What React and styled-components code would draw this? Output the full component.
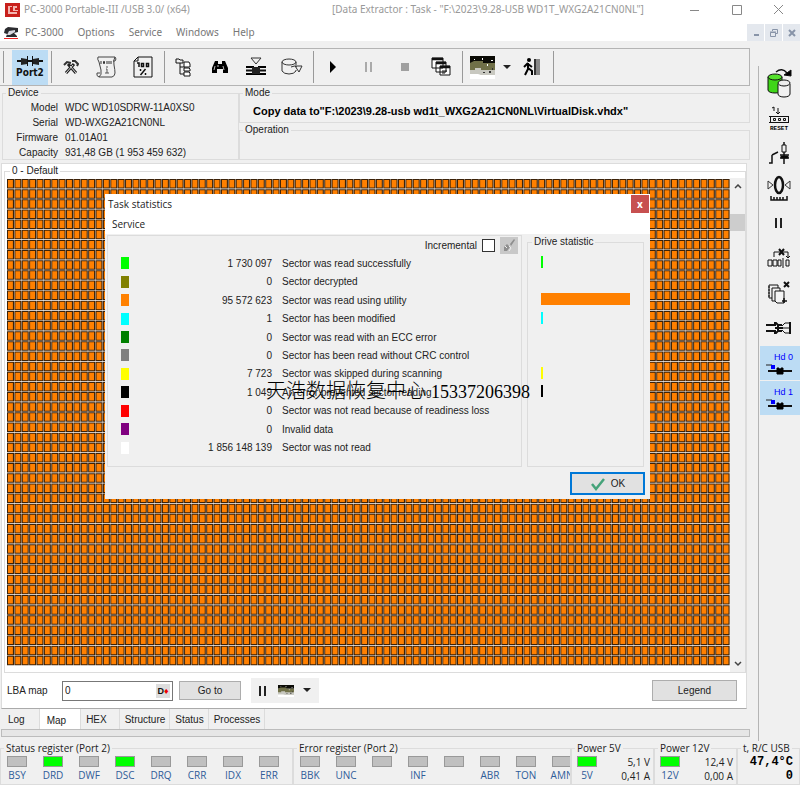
import React from "react";
import styled, { createGlobalStyle, css } from "styled-components";

const stats = [
  { color: "#00ff00", count: "1 730 097", label: "Sector was read successfully", share: 2 },
  { color: "#808000", count: "0", label: "Sector decrypted", share: 0 },
  { color: "#ff8000", count: "95 572 623", label: "Sector was read using utility", share: 100 },
  { color: "#00ffff", count: "1", label: "Sector has been modified", share: 2 },
  { color: "#008000", count: "0", label: "Sector was read with an ECC error", share: 0 },
  { color: "#808080", count: "0", label: "Sector has been read without CRC control", share: 0 },
  { color: "#ffff00", count: "7 723", label: "Sector was skipped during scanning", share: 2 },
  { color: "#000000", count: "1 049", label: "An error prevented sector reading", share: 2 },
  { color: "#ff0000", count: "0", label: "Sector was not read because of readiness loss", share: 0 },
  { color: "#800080", count: "0", label: "Invalid data", share: 0 },
  { color: "#ffffff", count: "1 856 148 139", label: "Sector was not read", share: 0 },
];

const device = [
  ["Model", "WDC WD10SDRW-11A0XS0"],
  ["Serial", "WD-WXG2A21CN0NL"],
  ["Firmware", "01.01A01"],
  ["Capacity", "931,48 GB (1 953 459 632)"],
];

const statusBits = ["BSY", "DRD", "DWF", "DSC", "DRQ", "CRR", "IDX", "ERR"];
const errorBits = ["BBK", "UNC", "", "INF", "", "ABR", "TON", "AMN"];
const tabs = ["Log", "Map", "HEX", "Structure", "Status", "Processes"];

const COLS = 98;
const ROWS = 48;

//#region Icons
const Icon = ({ size = 24, height, children, ...rest }) => (
  <svg
    width={size}
    height={height || size}
    viewBox={`0 0 ${size} ${height || size}`}
    fill="none"
    stroke="#111"
    aria-hidden="true"
    {...rest}
  >
    {children}
  </svg>
);

const AppIcon = () => (
  <Icon size={16} stroke="none">
    <path d="M0 1h15v14H0z" fill="#c8201c" />
    <path d="M3 12V4h4v1H5v5h7v2z" fill="#f3b5b0" />
    <path d="M8 4h4v2h-2v2h3v1H8z" fill="#f3b5b0" />
  </Icon>
);

const DocIcon = () => (
  <Icon size={16} height={14} stroke="none">
    <path d="M1 3l3-2 10 1v4l-4 1 3 3v1H2l1-3-3-1z" fill="#2c2c30" />
    <path d="M5 5l6-1v2l-5 3H3z" fill="#d8d8e0" />
    <path d="M0 12h14v1H0z" fill="#e22" />
  </Icon>
);

const ToolsIcon = () => (
  <Icon size={16}>
    <path d="M3 14l8-9M13 14L5 5" stroke="#222" strokeWidth="3" />
    <path d="M3 14l7-8M13 14L7 7" stroke="#ddd" />
    <path d="M1 6l3-3 4 1M9 2h3l3 3-1 2" stroke="#333" strokeWidth="2" />
  </Icon>
);

const ScrollIcon = () => (
  <Icon size={22}>
    <path d="M2 1h17q-2 3-1 8t1 8q0 3-3 4H3q3-2 2-7L3 6Q1 3 2 1zM3 21q-3-1-2-4h3M17 5h2q2-2 0-4" stroke="#444" />
    <path d="M5 5v3M7.500 5.500h1v2h-1zM11 5v3M13 5v3M15 5v3" stroke="#333" />
    <path d="M10 11h2M10 13h1v4M9 17h4" stroke="#555" />
  </Icon>
);

const ReportIcon = () => (
  <Icon size={20} height={22}>
    <path d="M5 1h14v20H1V5z" />
    <path d="M1 5h4V1" />
    <path d="M4 7h2v4M8.500 7.500h2v3h-2zM13.500 7.500h2v3h-2z" strokeWidth="1.500" />
    <path d="M7.500 13v2M12.500 13l-5 6M12.500 17v2" strokeWidth="1.500" />
  </Icon>
);

const TreeIcon = () => (
  <Icon size={18} height={20}>
    <path d="M1 4V2h3l1 1h3v3H1zM5 6v11h5M5 10h5" />
    <path d="M9 5h5l1 2v3H9zM9 11h5l1 1v2H9zM9 15h5l1 1v3H9z" fill="#fff" />
  </Icon>
);

const FindIcon = () => (
  <Icon size={16}>
    <path d="M3 2h3v3h4V2h3l3 7v5h-5v-4H5v4H0V9z" fill="#000" stroke="none" />
    <path d="M3 7l-1 4M11 7l1 4M6 6v2" stroke="#bbb" />
  </Icon>
);

const SectorIcon = () => (
  <Icon size={22}>
    <path d="M6 2h10l-5 6z" stroke="#333" />
    <path d="M1 10h8v2H1zM13 10h8v2h-8zM1 17h20v2H1z" fill="#000" stroke="none" />
    <path d="M1 14.500h20" strokeWidth="2" />
    <path d="M7 11h8v7H7z" fill="#222" stroke="none" />
  </Icon>
);

const DiskGoIcon = () => (
  <Icon size={22} height={18}>
    <ellipse cx="8" cy="4" rx="7" ry="3" stroke="#333" />
    <path d="M1 4v9q2 3 7 3 5 0 7-3v-1M15 4v3M10 9q4-2 6 0M14 8h7l-3 6z" stroke="#333" fill="none" />
  </Icon>
);

const PlayIcon = () => (
  <Icon size={12}>
    <path d="M3 0l6 6-6 6z" fill="#000" stroke="none" />
  </Icon>
);

const PauseIcon = ({ color = "#222" }) => (
  <Icon size={12}>
    <path d="M3 1v10M8 1v10" stroke={color} strokeWidth="2" />
  </Icon>
);

const StopIcon = () => (
  <Icon size={10}>
    <path d="M1 1h8v8H1z" fill="#a0a0a0" stroke="none" />
  </Icon>
);

const CascadeIcon = () => (
  <Icon size={20} stroke="#111">
    <path d="M1 1h11v10H1zM5 5h10v10H5zM9 9h10v9H9z" fill="#fff" />
    <path d="M1 2h11M5 6h10M9 10h10" strokeWidth="2.500" />
    <path d="M11 14h5M11 16h3" />
  </Icon>
);

const MapImageIcon = ({ size = 25, height = 23 }) => (
  <svg width={size} height={height} viewBox="0 0 25 23" preserveAspectRatio="none" aria-hidden="true">
    <path d="M0 0h25v19H0z" fill="#c8c8c0" />
    <path d="M0 0h25v7H0z" fill="#0a0a05" />
    <path d="M0 7l4-2h9v2h12v7H11v-2H5v2H0z" fill="#707048" />
    <path d="M0 18h8l3 1h14v4H0z" fill="#fff" />
    <path d="M12 2h1v2h-1zM21 4h2v1h-2zM17 8h1v2h-1zM4 3h1v1H4z" fill="#fff" />
    <path d="M13 16h2v1h-2zM19 15h2v2h-2zM22 12h1v2h-1z" fill="#333" />
  </svg>
);

const CaretIcon = () => (
  <Icon size={8} height={5}>
    <path d="M0 0h8L4 4z" fill="#222" stroke="none" />
  </Icon>
);

const ExitIcon = () => (
  <Icon size={20}>
    <path d="M12 2h6v16h-6z" fill="#888" stroke="none" />
    <path d="M12 2h2v16h-2z" fill="#333" stroke="none" />
    <circle cx="7" cy="3" r="2" fill="#000" stroke="none" />
    <path d="M6 6v6l-3 6M6 11l4 3v4M6 6l-4 4M6 7l4 3" strokeWidth="2" stroke="#000" />
  </Icon>
);

const PortIcon = () => (
  <Icon size={26} height={12}>
    <path d="M0 6h26" strokeWidth="2" />
    <path d="M4 3l6 1v5l-6 1zM22 3l-6 1v5l6 1z" fill="#222" stroke="none" />
    <path d="M10.500 1v10M15.500 1v10" />
  </Icon>
);

const CopyDisksIcon = () => (
  <Icon size={26} height={30}>
    <path d="M2 9v13c0 4 14 4 14 0V9" fill="#3fd619" />
    <ellipse cx="9" cy="9" rx="7" ry="3" fill="#55e02c" />
    <path d="M12 16v10c0 4 12 4 12 0V16" fill="#f2f2f2" />
    <ellipse cx="18" cy="15" rx="6" ry="3" fill="#eee" />
    <path d="M10 4q6-5 11 1" strokeWidth="1.5" />
    <path d="M18 7l7 1V2z" fill="#000" />
  </Icon>
);

const ResetIcon = () => (
  <Icon size={22} height={28}>
    <path d="M4 4l2-1v4M10 4v6M8 8l2 2 2-2" />
    <path d="M1 12.500h20M1 18.500h20" />
    <path d="M2.500 13v5M5.500 14.500h2v2h-2zM10.500 14.500h2v2h-2zM15.500 14.500h2v2h-2zM20.500 13v5" />
    <text x="2" y="26" fill="#000" stroke="none" fontSize="6" fontWeight="700" fontFamily="Liberation Mono, monospace">RESET</text>
  </Icon>
);

const SwitchIcon = () => (
  <Icon size={24}>
    <path d="M2 22h3V14M5 14l6-3M13 14h9M17 1v22M13 17h9" strokeWidth="1.500" />
    <path d="M15 4h4v7h-4z" fill="#f0f0f0" />
    <path d="M14 15h7v2h-7z" fill="#000" />
  </Icon>
);

const ZeroIcon = () => (
  <Icon size={24} height={26}>
    <ellipse cx="12" cy="10" rx="4" ry="8" strokeWidth="2.500" />
    <path d="M1 6l5 4-5 4zM23 6l-5 4 5 4z" stroke="#333" />
    <path d="M4 21v4h16v-4M7 22v3M10 22v3M13 22v3M16 22v3" strokeWidth="1.500" />
  </Icon>
);

const BlocksIcon = () => (
  <Icon size={24} height={20}>
    <path d="M1 12h4v6H1zM6 12h4v6H6zM11 12h3v6h-3zM16 10v10M19 12h3v6h-3zM7 9V4h14v6M19 8l2 2 2-2" />
    <path d="M12 1l5 6M17 1l-5 6" strokeWidth="2" />
  </Icon>
);

const PagesIcon = () => (
  <Icon size={24}>
    <path d="M5 17H2V4h9v3M5 7v13h3M5 7h8v3" />
    <path d="M1 6h2M1 9h2M1 12h2M1 15h2" />
    <path d="M8 10h9v12h-7l-2-2z" fill="#f4f4f4" />
    <path d="M17 1l5 5M22 1l-5 5" strokeWidth="2" />
    <path d="M17 17v5M15 20h5" strokeWidth="1.500" />
  </Icon>
);

const CableIcon = () => (
  <Icon size={26} height={14}>
    <path d="M0 4h10M0 10h10" strokeWidth="2" />
    <path d="M8 2h2l2 2h4M8 12h2l2-2h4M9 7h8M12 4v6" strokeWidth="2" />
    <path d="M16 5l3-3h5v10h-5l-3-3M17 7h7" />
    <path d="M24 1v12" strokeWidth="2" />
  </Icon>
);

const HeadIcon = () => (
  <Icon size={26} height={12}>
    <path d="M0 2h6" stroke="#222" />
    <path d="M5 2h4v4H5z" fill="#0000ff" stroke="none" />
    <path d="M2 8h24" strokeWidth="2" />
    <path d="M11 5h2v1h2V5h2v6h-6z" fill="#000" stroke="#000" />
  </Icon>
);

const BrushIcon = () => (
  <Icon size={14} stroke="none">
    <path d="M8 6l4-5 1 1-4 6zM2 9l3-3 3 3-3 4H2z" fill="#8e8e8e" />
    <path d="M7 8l2 2-2 3M3 8l2 2" stroke="#eee" />
  </Icon>
);

const CheckIcon = () => (
  <Icon size={16}>
    <path d="M2 8l4 5 8-10" stroke="#45a37a" strokeWidth="2.500" />
  </Icon>
);

const ArrowIcon = ({ down }) => (
  <Icon size={8} height={6}>
    <path d={down ? "M1 1l3 3 3-3" : "M1 4l3-3 3 3"} stroke="#444" strokeWidth="1.500" />
  </Icon>
);
//#endregion

// one path for the cell frames and one for the fills keeps the DOM small
const buildCells = (inset, w, h) => {
  let d = "";
  for (let row = 0; row < ROWS; row++) {
    for (let col = 0; col < COLS; col++) {
      const x = ((col * 723) / COLS + inset).toFixed(2);
      const y = ((row * 487) / ROWS + inset).toFixed(2);
      d += `M${x} ${y}h${w}v${h}h-${w}z`;
    }
  }
  return d;
};

const framePath = buildCells(0, 7, 9.5);
const fillPath = buildCells(1, 4.9, 7.5);

const SectorMap = () => (
  <StyledMap viewBox="0 0 723 487" preserveAspectRatio="none" role="img" aria-label="Sector map">
    <path d={framePath} fill="#3c2208" />
    <path d={fillPath} fill="#ff8000" />
  </StyledMap>
);

const Register = ({ title, bits, active = [], grow }) => (
  <RegisterGroup $grow={grow}>
    <Legend $ui>{title}</Legend>
    <BitList>
      {bits.map((bit, i) => (
        <Bit key={i}>
          <Led $on={active.includes(bit)} />
          {bit}
        </Bit>
      ))}
    </BitList>
  </RegisterGroup>
);

const Power = ({ title, name, volts, amps }) => (
  <PowerGroup>
    <Legend $ui>{title}</Legend>
    <PowerRow>
      <Bit>
        <Led $on />
        {name}
      </Bit>
      <Readings>
        <span>{volts}</span>
        <span>{amps}</span>
      </Readings>
    </PowerRow>
  </PowerGroup>
);

const StatisticsDialog = () => (
  <Dialog role="dialog" aria-label="Task statistics">
    <DialogTitle>
      Task statistics
      <CloseButton aria-label="Close">x</CloseButton>
    </DialogTitle>
    <DialogMenu>
      <DialogMenuItem>Service</DialogMenuItem>
    </DialogMenu>
    <DialogBody>
      <StatsPanel>
        <Incremental>
          <label htmlFor="incremental">Incremental</label>
          <CheckBox id="incremental" type="checkbox" />
          <BrushButton aria-label="Reset counters" disabled>
            <BrushIcon />
          </BrushButton>
        </Incremental>
        <StatsTable>
          <tbody>
            {stats.map((row) => (
              <tr key={row.label}>
                <SwatchCell>
                  <Swatch $color={row.color} />
                </SwatchCell>
                <CountCell>{row.count}</CountCell>
                <td>{row.label}</td>
              </tr>
            ))}
          </tbody>
        </StatsTable>
      </StatsPanel>
      <DriveGroup>
        <Legend>Drive statistic</Legend>
        <BarList>
          {stats.map((row) => (
            <Bar key={row.label} $color={row.color} style={{ width: `${row.share}%` }} />
          ))}
        </BarList>
      </DriveGroup>
    </DialogBody>
    <DialogFooter>
      <OkButton>
        <CheckIcon />
        OK
      </OkButton>
    </DialogFooter>
  </Dialog>
);

const App = () => (
  <Window>
    <GlobalStyle />
    <TitleBar>
      <AppIcon />
      <AppName>PC-3000 Portable-III /USB 3.0/ (x64)</AppName>
      <TaskName>[Data Extractor : Task - "F:\2023\9.28-USB WD1T_WXG2A21CN0NL"]</TaskName>
      <WindowButton aria-label="Minimize">
        <Icon size={12} stroke="#888"><path d="M1 6.500h9" /></Icon>
      </WindowButton>
      <WindowButton aria-label="Maximize">
        <Icon size={12} stroke="#888"><path d="M1.500 1.500h9v9h-9z" /></Icon>
      </WindowButton>
      <WindowButton aria-label="Close">
        <Icon size={12} stroke="#888"><path d="M1 1l9 9M10 1l-9 9" /></Icon>
      </WindowButton>
    </TitleBar>
    <MenuBar>
      <DocIcon />
      <MenuItem>PC-3000</MenuItem>
      <MenuItem>Options</MenuItem>
      <MenuItem>Service</MenuItem>
      <MenuItem>Windows</MenuItem>
      <MenuItem>Help</MenuItem>
      <MdiButtons>
        <MdiButton aria-label="Minimize child">
          <Icon size={10} stroke="#8894a8"><path d="M3 7h5" strokeWidth="2" /></Icon>
        </MdiButton>
        <MdiButton aria-label="Restore child">
          <Icon size={10} stroke="#8894a8"><path d="M3.500 3V1.500h5v4H7M1.500 4.500h5v4h-5zM1 4h6" /></Icon>
        </MdiButton>
        <MdiButton aria-label="Close child">
          <Icon size={10} stroke="#8894a8"><path d="M2 2l6 6M8 2L2 8" strokeWidth="2" /></Icon>
        </MdiButton>
      </MdiButtons>
    </MenuBar>

    <Workspace>
      <Main>
        <Toolbar>
          <Separator />
          <PortButton>
            <PortIcon />
            Port2
          </PortButton>
          <Separator />
          <ToolButton aria-label="Utilities"><ToolsIcon /></ToolButton>
          <ToolButton aria-label="Script"><ScrollIcon /></ToolButton>
          <ToolButton aria-label="Report"><ReportIcon /></ToolButton>
          <Separator />
          <ToolButton aria-label="Tree"><TreeIcon /></ToolButton>
          <ToolButton aria-label="Find"><FindIcon /></ToolButton>
          <ToolButton aria-label="Sectors"><SectorIcon /></ToolButton>
          <ToolButton aria-label="Export"><DiskGoIcon /></ToolButton>
          <Separator />
          <ToolButton aria-label="Start"><PlayIcon /></ToolButton>
          <ToolButton aria-label="Pause"><PauseIcon color="#aaa" /></ToolButton>
          <ToolButton aria-label="Stop"><StopIcon /></ToolButton>
          <ToolButton aria-label="Cascade"><CascadeIcon /></ToolButton>
          <Separator />
          <ToolButton aria-label="Map view"><MapImageIcon /></ToolButton>
          <CaretButton aria-label="Map view options"><CaretIcon /></CaretButton>
          <ToolButton aria-label="Exit"><ExitIcon /></ToolButton>
          <Separator />
        </Toolbar>

        <InfoRow>
          <DeviceGroup>
            <Legend>Device</Legend>
            <DeviceList>
              {device.map(([name, value]) => (
                <React.Fragment key={name}>
                  <dt>{name}</dt>
                  <dd>{value}</dd>
                </React.Fragment>
              ))}
            </DeviceList>
          </DeviceGroup>
          <ModeColumn>
            <ModeGroup>
              <Legend>Mode</Legend>
              <ModeText>Copy data to"F:\2023\9.28-usb wd1t_WXG2A21CN0NL\VirtualDisk.vhdx"</ModeText>
            </ModeGroup>
            <OperationGroup>
              <Legend>Operation</Legend>
            </OperationGroup>
          </ModeColumn>
        </InfoRow>

        <MapPanel>
          <MapGroup>
            <Legend>0 - Default</Legend>
            <MapRow>
              <SectorMap />
              <ScrollBar>
                <ScrollButton aria-label="Scroll up"><ArrowIcon /></ScrollButton>
                <ScrollThumb />
                <ScrollButton aria-label="Scroll down"><ArrowIcon down /></ScrollButton>
              </ScrollBar>
            </MapRow>
          </MapGroup>
          <LbaRow>
            <LbaLabel htmlFor="lba">LBA map</LbaLabel>
            <LbaBox>
              <LbaInput id="lba" defaultValue="0" />
              <RadixButton aria-label="Decimal">D<i>♦</i></RadixButton>
            </LbaBox>
            <PushButton $width={62}>Go to</PushButton>
            <MiniBar>
              <MiniButton aria-label="Pause map"><PauseIcon /></MiniButton>
              <MiniButton aria-label="Map style"><MapImageIcon size={16} height={12} /></MiniButton>
              <MiniButton aria-label="Map style options"><CaretIcon /></MiniButton>
            </MiniBar>
            <LegendSlot>
              <PushButton $width={85} $tall>Legend</PushButton>
            </LegendSlot>
          </LbaRow>
        </MapPanel>

        <TabRow role="tablist">
          {tabs.map((tab) => (
            <Tab key={tab} role="tab" aria-selected={tab === "Map"} $active={tab === "Map"}>
              {tab}
            </Tab>
          ))}
        </TabRow>
        <ProgressTrack />
      </Main>

      <SideBar>
        <SideButton aria-label="Copy disks"><CopyDisksIcon /></SideButton>
        <SideButton aria-label="Reset"><ResetIcon /></SideButton>
        <SideButton aria-label="Power switch"><SwitchIcon /></SideButton>
        <SideButton aria-label="Recalibrate"><ZeroIcon /></SideButton>
        <SideButton aria-label="Pause drive"><PauseIcon /></SideButton>
        <SideButton aria-label="Skip blocks"><BlocksIcon /></SideButton>
        <SideButton aria-label="Clear pages"><PagesIcon /></SideButton>
        <SideButton aria-label="Cable"><CableIcon /></SideButton>
        <SideButton $on><HeadName>Hd 0</HeadName><HeadIcon /></SideButton>
        <SideButton $on><HeadName>Hd 1</HeadName><HeadIcon /></SideButton>
      </SideBar>
    </Workspace>

    <StatusRow>
      <Register title="Status register (Port 2)" bits={statusBits} active={["DRD", "DSC"]} />
      <Register title="Error register (Port 2)" bits={errorBits} grow />
      <Power title="Power 5V" name="5V" volts="5,1 V" amps="0,41 A" />
      <Power title="Power 12V" name="12V" volts="12,4 V" amps="0,00 A" />
      <TempGroup>
        <Legend $ui>t, R/C USB</Legend>
        <TempValues>
          <span>47,4°C</span>
          <span>0</span>
        </TempValues>
      </TempGroup>
    </StatusRow>

    <StatisticsDialog />
    <Watermark>
      天浩数据恢复中心 <small>15337206398</small>
    </Watermark>
  </Window>
);

export default App;

//#region Styled Objects
const GlobalStyle = createGlobalStyle`
  * {
    box-sizing: border-box;
  }

  body {
    margin: 0;
    background: #f0f0f0;
    color: #222;
    font-family: "Liberation Sans", Arial, sans-serif;
    font-size: 10px;
    line-height: 15px;
  }

  button,
  input {
    margin: 0;
    padding: 0;
    border: 0;
    background: none;
    color: inherit;
    font: inherit;
  }

  svg {
    display: block;
    flex: none;
  }
`;

const uiFont = css`
  font-family: "Open Sans", "Noto Sans", sans-serif;
`;

const barFont = css`
  font-family: "Noto Sans", "Open Sans", sans-serif;
`;

const Window = styled.div`
  position: relative;
  display: flex;
  flex-direction: column;
  min-height: 100vh;
  overflow: hidden;
`;

const TitleBar = styled.header`
  display: flex;
  align-items: center;
  height: 19px;
  padding-left: 5px;
  background: #fff;
  color: #999;
  ${barFont}
`;

const AppName = styled.span`
  width: 311px;
  padding-left: 3px;
  white-space: nowrap;
`;

const TaskName = styled.span`
  flex: 1;
  white-space: nowrap;
`;

const WindowButton = styled.button`
  display: grid;
  place-items: center;
  width: 42px;
  height: 19px;
`;

const MenuBar = styled.nav`
  display: flex;
  align-items: center;
  height: 22px;
  padding: 5px 0 0 4px;
  background: #fff;
`;

const MenuItem = styled.button`
  padding: 0 9px 0 5px;
  color: #777;
  ${barFont}
`;

const MdiButtons = styled.div`
  display: flex;
  align-self: flex-end;
  gap: 1px;
  margin-left: auto;
`;

const MdiButton = styled.button`
  display: grid;
  place-items: center;
  width: 17px;
  height: 17px;
  background: #e4e8ee;
`;

const Workspace = styled.div`
  display: flex;
  flex: 1;
`;

const Main = styled.main`
  display: flex;
  flex: 1;
  flex-direction: column;
  min-width: 0;
  padding: 7px 8px 0 0;
`;

const Toolbar = styled.div`
  display: flex;
  align-items: center;
  height: 38px;
  padding-left: 3px;
  border: 1px solid #b4b4b4;
  border-left: 0;
`;

const Separator = styled.span`
  width: 1px;
  height: 32px;
  margin: 0 1px 0 3px;
  background: #999;

  &:first-child {
    margin: 0 8px 0 0;
  }
`;

const ToolButton = styled.button`
  display: grid;
  place-items: center;
  width: 36px;
  height: 34px;
`;

const PortButton = styled.button`
  display: flex;
  flex-direction: column;
  align-items: center;
  justify-content: center;
  width: 36px;
  height: 35px;
  background: #bcdcf4;
  color: #111;
  font-family: "DejaVu Sans Condensed", "DejaVu Sans", sans-serif;
  font-weight: 700;
  line-height: 12px;
`;

const CaretButton = styled(ToolButton)`
  width: 14px;
`;

const Legend = styled.legend`
  padding: 0 2px;
  line-height: 14px;
  ${({ $ui }) => $ui && uiFont}
`;

const Group = styled.fieldset`
  min-width: 0;
  margin: 0;
  padding: 0 3px;
  border: 1px solid #dcdcdc;
`;

const InfoRow = styled.div`
  display: flex;
  height: 74px;
  padding-left: 2px;
`;

const DeviceGroup = styled(Group)`
  width: 237px;
`;

const DeviceList = styled.dl`
  display: grid;
  grid-template-columns: 52px 1fr;
  column-gap: 7px;
  margin: 0;
  white-space: nowrap;

  dt {
    text-align: right;
  }

  dd {
    margin: 0;
  }
`;

const ModeColumn = styled.div`
  display: flex;
  flex: 1;
  flex-direction: column;
  min-width: 0;
`;

const ModeGroup = styled(Group)`
  height: 37px;
`;

const OperationGroup = styled(Group)`
  flex: 1;
`;

const ModeText = styled.p`
  margin: 0;
  padding: 4px 10px;
  color: #000;
  font-size: 11px;
  font-weight: 700;
  white-space: nowrap;
`;

const MapPanel = styled.section`
  display: flex;
  flex: 1;
  flex-direction: column;
  margin: 3px 3px 0 1px;
  border: 1px solid #dcdcdc;
  border-bottom: 1px solid #aaa;
  background: #fff;
`;

const MapGroup = styled(Group)`
  display: flex;
  flex: 1;
  flex-direction: column;
  margin-left: 2px;
  padding: 0 0 0 2px;

  legend {
    margin-left: 3px;
  }
`;

const MapRow = styled.div`
  display: flex;
  flex: 1;
  height: 100%;
`;

const StyledMap = styled.svg`
  flex: 1;
  width: 0;
  height: auto;
  margin: 1px 0 6px;
`;

const ScrollBar = styled.div`
  display: flex;
  flex-direction: column;
  width: 15px;
  background: #f0f0f0;
`;

const ScrollButton = styled.button`
  display: grid;
  place-items: center;
  height: 17px;
`;

const ScrollThumb = styled.div`
  height: 17px;
  margin: 19px 0 auto;
  background: #cdcdcd;
`;

const LbaRow = styled.div`
  display: flex;
  align-items: center;
  height: 35px;
  padding: 0 9px 0 5px;
`;

const LbaLabel = styled.label`
  width: 55px;
`;

const LbaBox = styled.div`
  display: flex;
  align-items: center;
  width: 111px;
  height: 20px;
  padding: 2px;
  border: 1px solid #777;
`;

const LbaInput = styled.input`
  flex: 1;
  min-width: 0;
`;

const RadixButton = styled.button`
  width: 14px;
  height: 14px;
  background: #ddd;
  color: #111;
  font-size: 9px;
  font-weight: 700;
  line-height: 14px;

  i {
    color: #e00;
    font-style: normal;
  }
`;

const PushButton = styled.button`
  width: ${({ $width }) => $width}px;
  height: ${({ $tall }) => ($tall ? 21 : 19)}px;
  margin-left: 6px;
  border: 1px solid #adadad;
  background: #e1e1e1;
`;

const MiniBar = styled.div`
  display: flex;
  align-items: center;
  justify-content: space-between;
  width: 68px;
  height: 25px;
  margin-left: 10px;
  padding: 0 8px 0 6px;
  background: #f0f0f0;
`;

const MiniButton = styled.button`
  display: block;
`;

const LegendSlot = styled.div`
  margin-left: auto;
`;

const TabRow = styled.div`
  display: flex;
  height: 20px;
  padding-left: 3px;
`;

const Tab = styled.button`
  padding: ${({ $active }) => ($active ? "3px 14px 0 7px" : "0 4px 0 5px")};
  border-right: 1px solid #dcdcdc;
  background: ${({ $active }) => ($active ? "#fff" : "transparent")};

  &:first-child {
    padding-right: 14px;
  }

  &:nth-child(3) {
    padding-right: 12px;
  }
`;

const ProgressTrack = styled.div`
  height: 8px;
  margin: 0 0 4px 1px;
  border: 1px solid #bcbcbc;
  background: #e6e6e6;
`;

const SideBar = styled.aside`
  display: flex;
  flex-direction: column;
  width: 42px;
  margin-top: 25px;
  border-left: 1px solid #b4b4b4;
`;

const SideButton = styled.button`
  display: flex;
  flex-direction: column;
  align-items: center;
  justify-content: center;
  height: 35px;
  margin-left: 1px;
  padding-right: 3px;
  border-bottom: 1px solid #f0f0f0;
  background: ${({ $on }) => ($on ? "#bcdcf4" : "transparent")};
`;

const HeadName = styled.span`
  padding-left: 10px;
  color: #0000ff;
  font-size: 9px;
  line-height: 11px;
`;

const StatusRow = styled.footer`
  display: flex;
  height: 44px;
  white-space: nowrap;
  ${uiFont}
`;

const RegisterGroup = styled(Group)`
  flex: ${({ $grow }) => ($grow ? "1" : "none")};
  width: ${({ $grow }) => ($grow ? "auto" : "293px")};
  overflow: hidden;
`;

const BitList = styled.div`
  display: flex;
  padding-left: 1px;
`;

const Bit = styled.div`
  display: flex;
  flex: none;
  flex-direction: column;
  align-items: center;
  width: 36px;
  padding-right: 12px;
  color: #2f5c99;
`;

const Led = styled.span`
  width: 20px;
  height: 11px;
  margin: 1px 0;
  border: 1px solid #999;
  background: ${({ $on }) => ($on ? "#00ff00" : "#c0c0c0")};
`;

const PowerGroup = styled(Group)`
  width: 83px;
`;

const PowerRow = styled.div`
  display: flex;
  justify-content: space-between;
`;

const Readings = styled.div`
  display: flex;
  flex-direction: column;
  text-align: right;
  line-height: 14px;
`;

const TempGroup = styled(Group)`
  width: 63px;
`;

const TempValues = styled(Readings)`
  padding-right: 3px;
  color: #000;
  font-family: "Liberation Mono", monospace;
  font-size: 12px;
  font-weight: 700;
`;

const Dialog = styled.section`
  position: absolute;
  top: 194px;
  left: 105px;
  width: 545px;
  background: #f0f0f0;
`;

const DialogTitle = styled.header`
  display: flex;
  align-items: center;
  justify-content: space-between;
  height: 20px;
  padding: 0 1px 0 3px;
  background: #fff;
  ${uiFont}
`;

const CloseButton = styled.button`
  width: 18px;
  height: 18px;
  background: #c75050;
  color: #fff;
  font-weight: 700;
  line-height: 16px;
`;

const DialogMenu = styled.nav`
  height: 20px;
  padding: 3px 2px;
  background: #fff;
`;

const DialogMenuItem = styled.button`
  padding: 0 5px;
  ${uiFont}
`;

const DialogBody = styled.div`
  display: flex;
  gap: 5px;
  padding: 1px 6px 0 2px;
`;

const StatsPanel = styled.div`
  flex: 1;
  min-width: 0;
  padding-bottom: 9px;
  border: 1px solid #dcdcdc;
`;

const Incremental = styled.div`
  display: flex;
  align-items: center;
  justify-content: flex-end;
  gap: 5px;
  height: 18px;
  padding-right: 3px;
`;

const CheckBox = styled.input`
  width: 13px;
  height: 13px;
  margin: 0;
  border: 1px solid #333;
  background: #fff;
  appearance: none;
`;

const BrushButton = styled.button`
  display: grid;
  place-items: center;
  width: 18px;
  height: 17px;
  background: #c8c8c8;
`;

const StatsTable = styled.table`
  width: 100%;
  height: 203px;
  border-collapse: collapse;
  table-layout: fixed;
  white-space: nowrap;

  td {
    padding: 0;
  }
`;

const SwatchCell = styled.td`
  width: 34px;
`;

const Swatch = styled.div`
  width: 8px;
  height: 12px;
  margin-left: 13px;
  background: ${({ $color }) => $color};
`;

const CountCell = styled.td`
  width: 130px;
  text-align: right;

  && + td {
    padding-left: 10px;
  }
`;

const DriveGroup = styled(Group)`
  width: 117px;
  padding: 0 13px 9px;

  legend {
    margin-left: -9px;
  }
`;

const BarList = styled.div`
  display: grid;
  grid-template-rows: repeat(11, 1fr);
  align-items: center;
  height: 203px;
  margin-top: 4px;
`;

const Bar = styled.div`
  height: 12px;
  background: ${({ $color }) => $color};
`;

const DialogFooter = styled.footer`
  display: flex;
  justify-content: flex-end;
  padding: 5px 5px 4px;
`;

const OkButton = styled.button`
  display: flex;
  align-items: center;
  justify-content: center;
  gap: 5px;
  width: 75px;
  height: 23px;
  border: 2px solid #0078d7;
  background: #e1e1e1;
`;

const Watermark = styled.div`
  position: absolute;
  top: 378px;
  left: 266px;
  color: #000;
  font-family: "Liberation Serif", "Noto Sans CJK SC", serif;
  font-size: 20px;
  font-weight: 300;
  line-height: 26px;
  white-space: nowrap;

  small {
    font-size: 18px;
  }
`;
//#endregion
